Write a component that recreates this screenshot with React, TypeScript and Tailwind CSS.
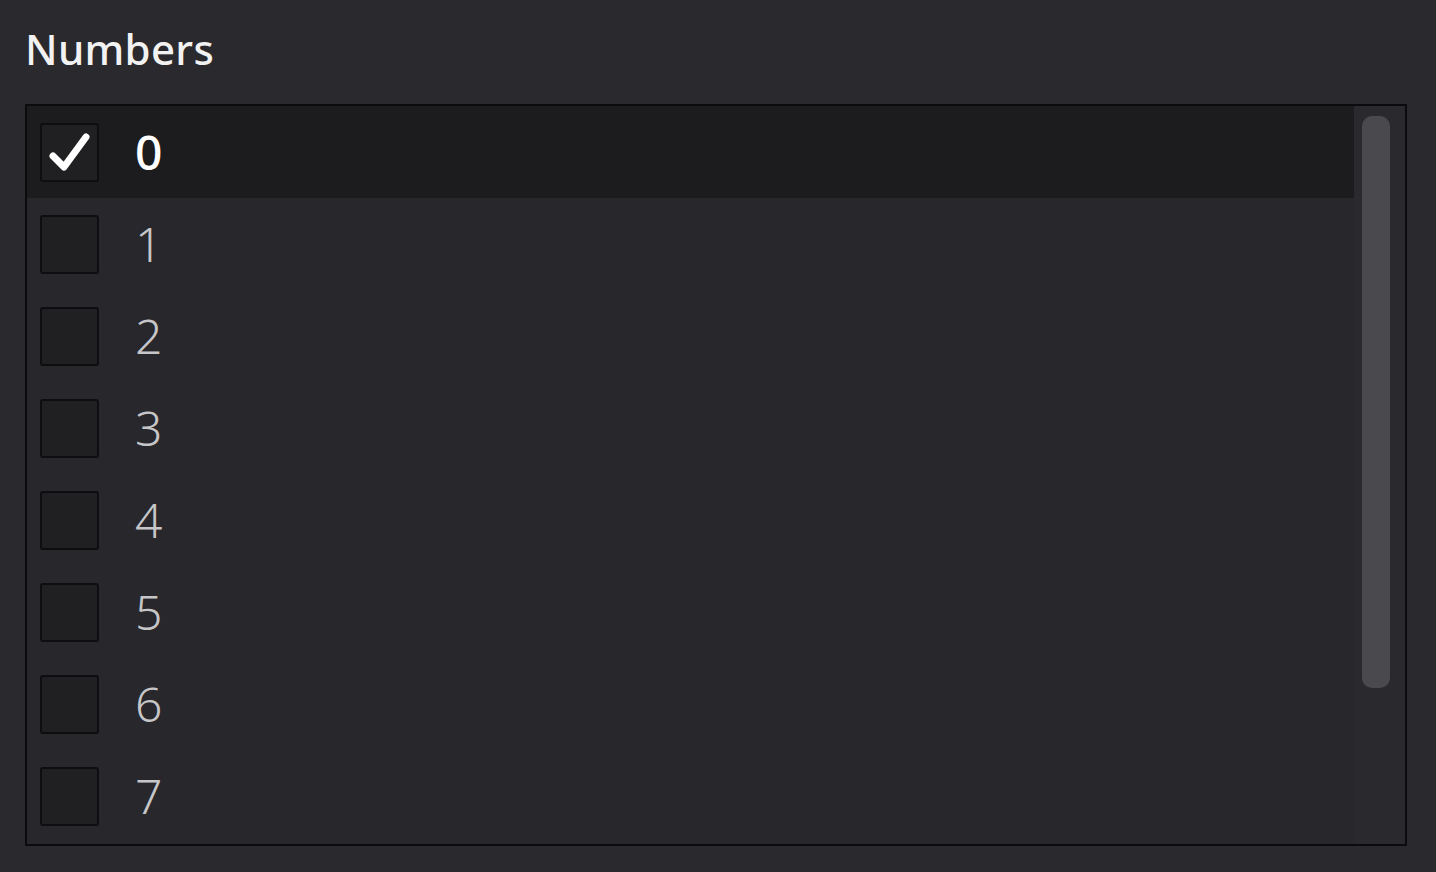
import React from 'react';

const items = ['0', '1', '2', '3', '4', '5', '6', '7'];

const Check = () => (
  <svg width="44" height="44" viewBox="0 0 44 44" fill="none">
    <path d="M5 26 L16 37 L38 7" stroke="#ffffff" strokeWidth="7" strokeLinecap="round" strokeLinejoin="round" />
  </svg>
);

export default function App() {
  const [checked, setChecked] = React.useState<string[]>(['0']);

  const toggle = (v: string) =>
    setChecked((c) => (c.includes(v) ? c.filter((x) => x !== v) : [...c, v]));

  return (
    <div className="w-[1436px] h-[872px] bg-[#29292e] pl-[25px] pt-[22px] overflow-hidden" style={{ fontFamily: '"Noto Sans", "Open Sans", sans-serif' }}>
      <h1 className="text-[42px] leading-[54px] text-[#f2f2f2] font-medium tracking-[0.3px]">Numbers</h1>
      <div className="mt-[28px] w-[1382px] h-[742px] border-2 border-[#0b0b0d] bg-[#27272c] flex">
        <div className="flex-1 overflow-hidden">
          {items.map((v) => {
            const on = checked.includes(v);
            return (
              <div
                key={v}
                onClick={() => toggle(v)}
                className={`h-[92px] flex items-center pl-[13px] cursor-pointer ${on ? 'bg-[#1c1c1f]' : ''}`}
              >
                <div className="w-[59px] h-[59px] border-2 border-[#0e0e10] bg-[#201f21] rounded-[3px] flex items-center justify-center">
                  {on && <Check />}
                </div>
                <span className={`ml-[36px] text-[48px] leading-none ${on ? 'text-white font-medium' : 'text-[#c6c6c8] font-light'}`}>
                  {v}
                </span>
              </div>
            );
          })}
        </div>
        <div className="w-[51px] pt-[10px] pl-[8px] bg-[#29292e]">
          <div className="w-[28px] h-[572px] rounded-[10px] bg-[#4a4a4e]" />
        </div>
      </div>
    </div>
  );
}
